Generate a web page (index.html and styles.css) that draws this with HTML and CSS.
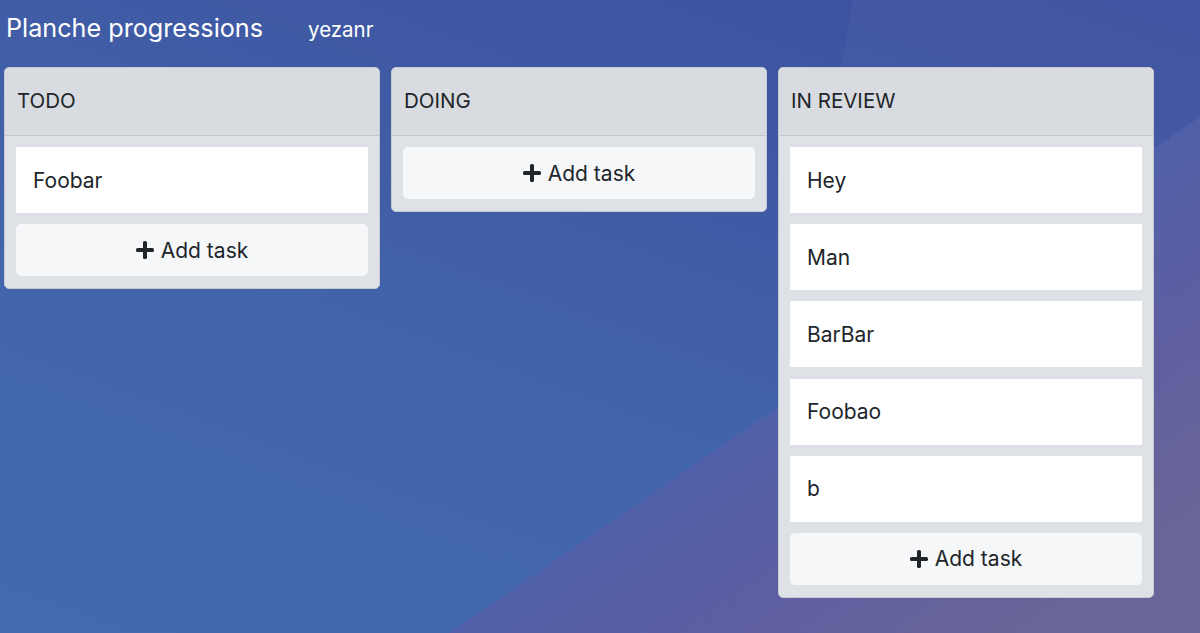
FILE: index.html
```html
<!DOCTYPE html>
<html lang="fr">
<head>
<meta charset="utf-8">
<title>Planche progressions</title>
<link rel="stylesheet" href="styles.css">
</head>
<body>
<div class="page">
  <nav class="navbar">
    <span class="brand">Planche progressions</span>
    <span class="user">yezanr</span>
  </nav>
  <main class="board">
    <section class="column">
      <header class="column-header">TODO</header>
      <div class="column-body">
        <div class="task">Foobar</div>
        <button class="add-task"><svg class="plus" viewBox="0 0 18 18"><rect x="7" y="0" width="4" height="18" rx="1.6"/><rect x="0" y="7" width="18" height="4" rx="1.6"/></svg>Add task</button>
      </div>
    </section>
    <section class="column">
      <header class="column-header">DOING</header>
      <div class="column-body">
        <button class="add-task"><svg class="plus" viewBox="0 0 18 18"><rect x="7" y="0" width="4" height="18" rx="1.6"/><rect x="0" y="7" width="18" height="4" rx="1.6"/></svg>Add task</button>
      </div>
    </section>
    <section class="column">
      <header class="column-header">IN REVIEW</header>
      <div class="column-body">
        <div class="task">Hey</div>
        <div class="task">Man</div>
        <div class="task">BarBar</div>
        <div class="task">Foobao</div>
        <div class="task">b</div>
        <button class="add-task"><svg class="plus" viewBox="0 0 18 18"><rect x="7" y="0" width="4" height="18" rx="1.6"/><rect x="0" y="7" width="18" height="4" rx="1.6"/></svg>Add task</button>
      </div>
    </section>
  </main>
</div>
</body>
</html>
```

FILE: styles.css
```css
html, body {
  margin: 0;
  padding: 0;
}

body {
  font-family: Inter, "Noto Sans", "Liberation Sans", sans-serif;
  color: #212529;
}

.page {
  min-height: 100vh;
  width: 100%;
  box-sizing: border-box;
  background:
    linear-gradient(145.5deg, rgba(0,0,0,0) 776px, #5061a9 776px, #5c5ea3 900px, #6a6598 1100px),
    linear-gradient(100deg, rgba(255,255,255,0) 0px, rgba(255,255,255,0) 840px, rgba(255,255,255,0.03) 840px),
    linear-gradient(200deg, #3c4f9e 0%, #3f58a3 30%, #4264aa 60%, #4369ae 100%);
  background-color: #4265ab;
  overflow: hidden;
}

.navbar {
  display: flex;
  align-items: baseline;
  gap: 45px;
  padding: 10px 6px 0 6px;
  height: 57px;
  box-sizing: border-box;
  color: #ffffff;
}

.brand {
  font-size: 25.2px;
  line-height: 36px;
}

.user {
  font-size: 20.5px;
  line-height: 36px;
}

.board {
  display: flex;
  align-items: flex-start;
  gap: 11px;
  padding: 10px 4px 0 4px;
}

.column {
  width: 376px;
  box-sizing: border-box;
  background: #dee1e5;
  border: 1px solid #c7cad0;
  border-radius: 5px;
  overflow: hidden;
}

.column-header {
  background: #d8dbe0;
  border-bottom: 1px solid #c3c6cc;
  font-size: 20.5px;
  line-height: 30px;
  padding: 18px 12px 19px 12px;
}

.column-body {
  display: flex;
  flex-direction: column;
  gap: 11.2px;
  padding: 11px 11px 12px 11px;
}

.task {
  background: #ffffff;
  height: 66px;
  display: flex;
  align-items: center;
  padding: 0 17px;
  font-size: 21px;
  box-sizing: border-box;
  border-radius: 1px;
}

.add-task {
  display: flex;
  align-items: center;
  justify-content: center;
  gap: 7px;
  height: 52px;
  border: none;
  border-radius: 5px;
  background: #f6f7f9;
  font-family: inherit;
  font-size: 21px;
  color: #212529;
  padding: 0;
  cursor: pointer;
}

.plus {
  width: 18px;
  height: 18px;
  fill: #212529;
}
```
